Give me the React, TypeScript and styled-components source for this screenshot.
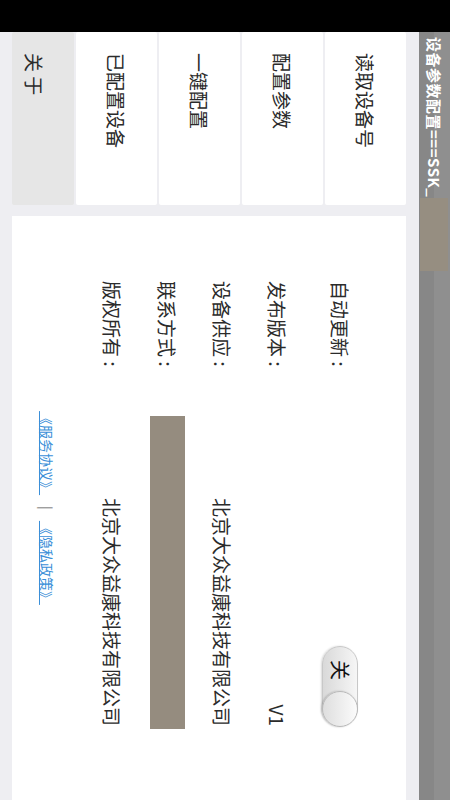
import styled, { createGlobalStyle } from 'styled-components';

const GlobalStyle = createGlobalStyle`
  html, body {
    margin: 0;
    padding: 0;
    background: #eeeef2;
  }
  body {
    font-family: "Noto Sans CJK SC", "Noto Sans", sans-serif;
  }
`;

const tabs = ['读取设备号', '配置参数', '一键配置', '已配置设备', '关 于'];

const App = () => {
  return (
    <>
      <GlobalStyle />
      <StatusBar />
      <Stage>
        {/* 가로 화면을 시계방향으로 돌려서 그린다 */}
        <Landscape>
          <TitleBar>
            <Title>设备参数配置===SSK_</Title>
            <TitleBlock />
          </TitleBar>

          <Body>
            <Sidebar>
              {tabs.map((t, i) => (
                <Tab key={t} $active={i === tabs.length - 1}>
                  {t}
                </Tab>
              ))}
            </Sidebar>

            <Panel>
              <Rows>
                <Row $first>
                  <Label>自动更新 :</Label>
                  <Toggle>
                    <ToggleText>关</ToggleText>
                    <Knob />
                  </Toggle>
                </Row>
                <Row>
                  <Label>发布版本 :</Label>
                  <Value>V1</Value>
                </Row>
                <Row>
                  <Label>设备供应 :</Label>
                  <Value>北京大众益康科技有限公司</Value>
                </Row>
                <Row>
                  <Label>联系方式 :</Label>
                  <Redacted />
                </Row>
                <Row>
                  <Label>版权所有 :</Label>
                  <Value>北京大众益康科技有限公司</Value>
                </Row>
              </Rows>

              <Links>
                <Link>《服务协议》</Link>
                <Sep>|</Sep>
                <Link>《隐私政策》</Link>
              </Links>
            </Panel>
          </Body>
        </Landscape>
      </Stage>
    </>
  );
};

const StatusBar = styled.div`
  height: 32px;
  background: #000;
`;

const Stage = styled.div`
  width: 450px;
  height: 768px;
  overflow: hidden;
`;

const Landscape = styled.div`
  width: 768px;
  height: 450px;
  transform-origin: 0 0;
  transform: translateX(450px) rotate(90deg);
  display: flex;
  flex-direction: column;
  background: #eeeef2;
`;

const TitleBar = styled.div`
  height: 31px;
  flex-shrink: 0;
  display: flex;
  align-items: center;
  background: linear-gradient(#8f8f8f 0, #8f8f8f 50%, #878787 50%, #878787 100%);
`;

const Title = styled.div`
  padding-left: 5px;
  font-size: 15px;
  font-weight: 700;
  color: #fff;
  white-space: nowrap;
  letter-spacing: 0.5px;
`;

const TitleBlock = styled.div`
  width: 73px;
  height: 28px;
  margin-left: 1px;
  background: #968e81;
`;

const Body = styled.div`
  flex: 1;
  display: flex;
  gap: 11px;
  padding: 13px 0;
`;

const Sidebar = styled.div`
  width: 173px;
  flex-shrink: 0;
  display: flex;
  flex-direction: column;
  gap: 2px;
`;

const Tab = styled.div<{ $active: boolean }>`
  height: ${({ $active }) => ($active ? '62px' : '81px')};
  display: flex;
  align-items: ${({ $active }) => ($active ? 'flex-end' : 'center')};
  padding-left: 21px;
  padding-bottom: ${({ $active }) => ($active ? '9px' : '0')};
  box-sizing: border-box;
  background: ${({ $active }) => ($active ? '#e6e6e6' : '#fff')};
  font-size: 19px;
  color: #2b2b2b;
  white-space: pre;
  border-radius: 2px;
`;

const Panel = styled.div`
  flex: 1;
  background: #fff;
  display: flex;
  flex-direction: column;
  padding: 38px 0 0 65px;
`;

const Rows = styled.div`
  width: 445px;
  display: flex;
  flex-direction: column;
`;

const Row = styled.div<{ $first?: boolean }>`
  height: 55px;
  margin-bottom: ${({ $first }) => ($first ? '8px' : '0')};
  display: flex;
  align-items: center;
  justify-content: space-between;
`;

const Label = styled.span`
  font-size: 19px;
  color: #2b2b2b;
  white-space: pre;
`;

const Value = styled.span`
  font-size: 19px;
  color: #2b2b2b;
`;

const Toggle = styled.div`
  width: 80px;
  height: 36px;
  box-sizing: border-box;
  border-radius: 18px;
  border: 1px solid #c8c8c8;
  background: linear-gradient(#f6f6f6, #d9d9d9);
  display: flex;
  align-items: center;
  justify-content: space-between;
  padding-left: 13px;
  box-shadow: 0 1px 2px rgba(0, 0, 0, 0.15);
`;

const ToggleText = styled.span`
  font-size: 20px;
  color: #111;
`;

const Knob = styled.div`
  width: 36px;
  height: 36px;
  box-sizing: border-box;
  margin-right: -2px;
  border-radius: 50%;
  border: 1px solid #b9b9b9;
  background: linear-gradient(#fbfbfb, #dedede);
  box-shadow: 0 1px 2px rgba(0, 0, 0, 0.2);
`;

const Redacted = styled.div`
  width: 313px;
  height: 35px;
  margin-right: -3px;
  background: #958c7f;
`;

const Links = styled.div`
  margin-top: auto;
  margin-left: -65px;
  padding-bottom: 25px;
  display: flex;
  justify-content: center;
  align-items: center;
  gap: 11px;
  font-size: 14px;
`;

const Link = styled.span`
  color: #3b8fd8;
  text-decoration: underline;
`;

const Sep = styled.span`
  color: #555;
`;

export default App;
